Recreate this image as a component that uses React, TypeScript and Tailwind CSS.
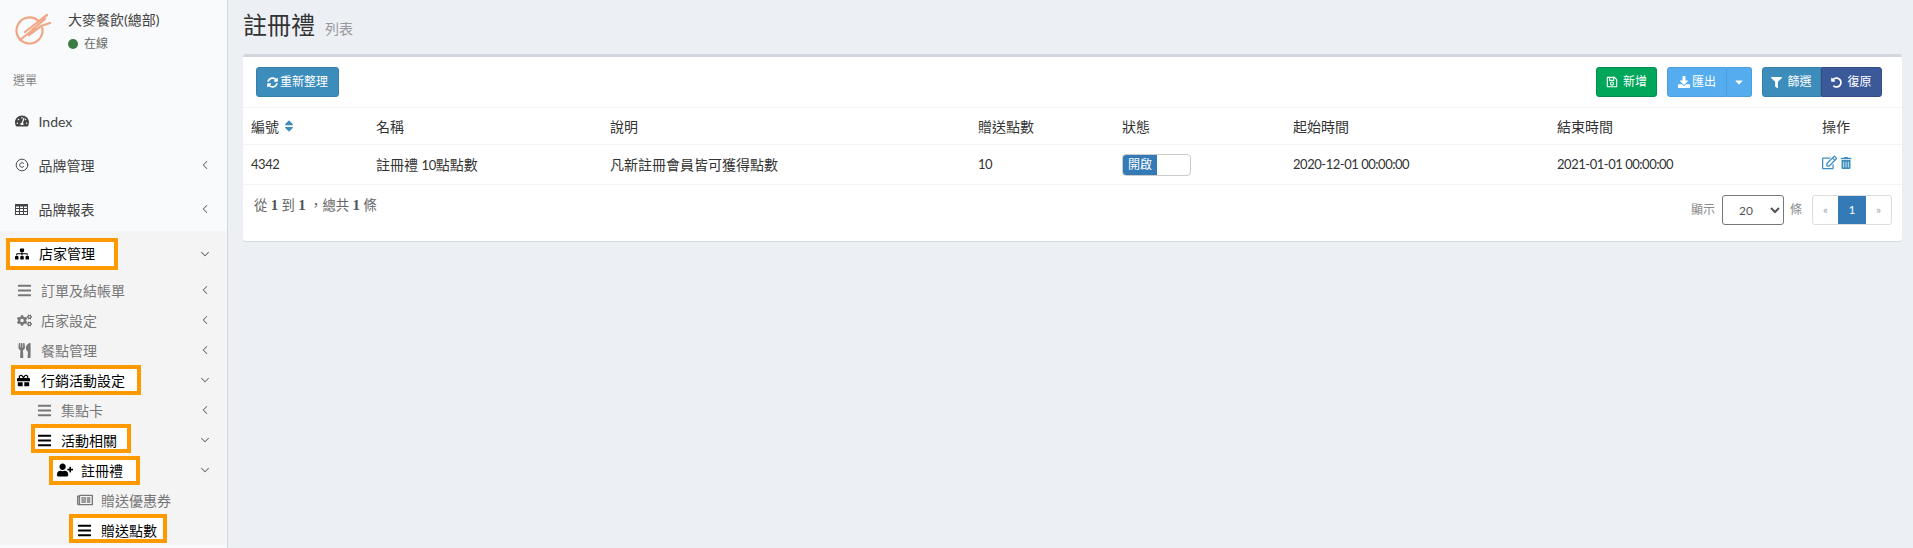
import type { ReactNode } from "react";
import { ChevronDown, ChevronLeft, Copyright } from "lucide-react";
import {
  FaBars,
  FaCaretDown,
  FaCogs,
  FaDownload,
  FaFilter,
  FaGift,
  FaRegEdit,
  FaRegNewspaper,
  FaRegSave,
  FaSitemap,
  FaSort,
  FaSyncAlt,
  FaTachometerAlt,
  FaTrashAlt,
  FaUndoAlt,
  FaUserPlus,
  FaUtensils
} from "react-icons/fa";

const font = "font-['Lato','Noto_Sans_CJK_TC',sans-serif]";

function Logo() {
  return (
    <svg width="36" height="36" viewBox="0 0 36 36" fill="none" stroke="#f0a583" strokeWidth="2.2" strokeLinecap="round">
      <path d="M23.7 10.3 A13 13 0 1 0 27.3 17.2" />
      <path d="M5 29 L20 17" />
      <path d="M10 21 L24 10 L32 4" />
      <path d="M14 24 L26 15 L35 12" />
      <path d="M17 19 L30 8" />
    </svg>
  );
}

function TableIcon() {
  return (
    <svg width="13" height="11" viewBox="0 0 13 11" fill="none" stroke="currentColor" strokeWidth="1">
      <rect x="0.5" y="0.5" width="12" height="10" />
      <path d="M0.5 1.5 H12.5" strokeWidth="2" />
      <path d="M0.5 4.5 H12.5 M0.5 7.5 H12.5 M4.5 1 V10.5 M8.5 1 V10.5" />
    </svg>
  );
}

function Arrow({ open }: { open?: boolean }) {
  return (
    <span className="ml-auto mr-[15px] text-[#666]">
      {open ? <ChevronDown size={14} strokeWidth={1.8} /> : <ChevronLeft size={14} strokeWidth={1.8} />}
    </span>
  );
}

function TopItem({ icon, label, arrow = true }: { icon: ReactNode; label: string; arrow?: boolean }) {
  return (
    <div className="flex h-11 items-center pl-[15px] text-[14px] text-[#444]">
      <span className="flex w-[23.5px] shrink-0">{icon}</span>
      <span>{label}</span>
      {arrow && <Arrow />}
    </div>
  );
}

// the orange marks sit around the icon and label, the row keeps its height
function Mark({ children, className }: { children: ReactNode; className: string }) {
  return (
    <span className={`inline-flex items-center bg-white text-black outline-[4px] outline-[#ff9900] ${className}`}>
      {children}
    </span>
  );
}

function SubItem({ pad, icon, label, arrow = true }: { pad: string; icon: ReactNode; label: string; arrow?: boolean }) {
  return (
    <div className={`flex h-[30px] items-center text-[14px] text-[#777] ${pad}`}>
      <span className="flex w-[24px] shrink-0">{icon}</span>
      <span>{label}</span>
      {arrow && <Arrow />}
    </div>
  );
}

function Sidebar() {
  return (
    <aside className="h-[548px] w-[228px] shrink-0 overflow-hidden border-r border-[#d2d6de] bg-[#f9fafc]">
      <div className="flex h-[64px] pl-[15px] pt-[11px]">
        <Logo />
        <div className="ml-[17px]">
          <div className="text-[14px] leading-[18px] text-[#444]">大麥餐飲(總部)</div>
          <div className="mt-[7px] flex items-center text-[12px] leading-[16px] text-[#666]">
            <span className="mr-[6px] h-[10px] w-[10px] rounded-full bg-[#3a7d44]" />
            在線
          </div>
        </div>
      </div>
      <div className="h-[35px] pl-[13px] pt-[8px] text-[12px] leading-[18px] text-[#848484]">選單</div>
      <TopItem icon={<FaTachometerAlt size={14} />} label="Index" arrow={false} />
      <TopItem icon={<Copyright size={14} strokeWidth={1.6} />} label="品牌管理" />
      <TopItem icon={<TableIcon />} label="品牌報表" />
      <div className="bg-[#f4f4f5]">
        <div className="flex h-[45px] items-center pl-[15px] text-[14px]">
          <Mark className="-ml-[5px] h-[24px] w-[104px] pl-[5px]">
            <span className="flex w-[24px] shrink-0"><FaSitemap size={14} /></span>
            店家管理
          </Mark>
          <Arrow open />
        </div>
        <div className="-mt-[1px]">
          <SubItem pad="pl-[17px]" icon={<FaBars size={15} />} label="訂單及結帳單" />
          <SubItem pad="pl-[17px]" icon={<FaCogs size={15} />} label="店家設定" />
          <SubItem pad="pl-[17px]" icon={<FaUtensils size={15} />} label="餐點管理" />
          <div className="flex h-[30px] items-center pl-[15px] text-[14px]">
            <Mark className="h-[22px] w-[122px] pl-[2px]">
              <span className="flex w-[24px] shrink-0"><FaGift size={13} /></span>
              行銷活動設定
            </Mark>
            <Arrow open />
          </div>
          <SubItem pad="pl-[37px]" icon={<FaBars size={15} />} label="集點卡" />
          <div className="flex h-[30px] items-center pl-[35px] text-[14px]">
            <Mark className="mb-[3px] h-[21px] w-[92px] pl-[2px] pt-[3px]">
              <span className="flex w-[24px] shrink-0"><FaBars size={15} /></span>
              活動相關
            </Mark>
            <Arrow open />
          </div>
          <div className="flex h-[30px] items-center pl-[53px] text-[14px]">
            <Mark className="h-[21px] w-[83px] pl-[4px]">
              <span className="flex w-[24px] shrink-0"><FaUserPlus size={16} /></span>
              註冊禮
            </Mark>
            <Arrow open />
          </div>
          <SubItem pad="pl-[77px]" icon={<FaRegNewspaper size={16} />} label="贈送優惠券" arrow={false} />
          <div className="flex h-[30px] items-center pl-[73px] text-[14px]">
            <Mark className="mb-[3px] h-[21px] w-[90px] pl-[4px] pt-[3px]">
              <span className="flex w-[24px] shrink-0"><FaBars size={15} /></span>
              贈送點數
            </Mark>
          </div>
        </div>
      </div>
    </aside>
  );
}

const columns = [
  "w-[125px]",
  "w-[234px]",
  "w-[368px]",
  "w-[144px]",
  "w-[171px]",
  "w-[264px]",
  "w-[265px]",
  "w-[88px]"
];

const headers = ["編號", "名稱", "說明", "贈送點數", "狀態", "起始時間", "結束時間", "操作"];

function Table() {
  return (
    <table className="w-full table-fixed border-collapse text-left text-[14px] text-[#333]">
      <colgroup>
        {columns.map((width) => (
          <col key={width} className={width} />
        ))}
      </colgroup>
      <thead>
        <tr className="h-[37px] border-y border-[#f4f4f4]">
          {headers.map((header, index) => (
            <th key={header} className="px-2 font-normal">
              <span className="flex items-center gap-[3px]">
                {header}
                {index === 0 && <FaSort size={14} className="text-[#3c8dbc]" />}
              </span>
            </th>
          ))}
        </tr>
      </thead>
      <tbody>
        <tr className="h-[40px] border-b border-[#f4f4f4] text-[13px] tracking-[-0.47px]">
          <td className="px-2">4342</td>
          <td className="px-2 text-[14px] tracking-normal">
            註冊禮 <span className="text-[13px] tracking-[-0.47px]">10</span>點點數
          </td>
          <td className="px-2 text-[14px] tracking-normal">凡新註冊會員皆可獲得點數</td>
          <td className="px-2">10</td>
          <td className="px-2 tracking-normal">
            <div className="flex h-[22px] w-[69px] overflow-hidden rounded-[4px] border border-[#ccc]">
              <span className="flex w-[34px] items-center justify-center bg-[#337ab7] text-[12px] text-white">開啟</span>
            </div>
          </td>
          <td className="px-2">2020-12-01 00:00:00</td>
          <td className="px-2">2021-01-01 00:00:00</td>
          <td className="px-2">
            <span className="-mt-[4px] flex items-center gap-[3px] text-[#3c8dbc]">
              <FaRegEdit size={15} />
              <FaTrashAlt size={12} />
            </span>
          </td>
        </tr>
      </tbody>
    </table>
  );
}

function Toolbar() {
  return (
    <div className="flex h-[50px] items-center justify-between pl-[13px] pr-[20px] text-[12px] text-white">
      <button type="button" className="flex h-[30px] w-[83px] items-center justify-center gap-[2px] rounded-[3px] border border-[#367fa9] bg-[#3c8dbc]">
        <FaSyncAlt size={11} />
        重新整理
      </button>
      <div className="flex items-center gap-[10px]">
        <button type="button" className="flex h-[30px] w-[61px] items-center justify-center gap-[5px] rounded-[3px] border border-[#008d4c] bg-[#00a65a]">
          <FaRegSave size={12} />
          新增
        </button>
        <div className="flex h-[30px] w-[85px]">
          <button type="button" className="flex w-[60px] items-center justify-center gap-[2px] rounded-l-[3px] border border-[#4a9fdc] bg-[#55acee]">
            <FaDownload size={12} />
            匯出
          </button>
          <button type="button" className="flex w-[25px] items-center justify-center rounded-r-[3px] border border-l-0 border-[#4a9fdc] bg-[#55acee]">
            <FaCaretDown size={12} />
          </button>
        </div>
        <div className="flex h-[30px] w-[120px]">
          <button type="button" className="flex w-[59px] items-center justify-center gap-[5px] rounded-l-[3px] border border-[#367fa9] bg-[#3c8dbc]">
            <FaFilter size={11} />
            篩選
          </button>
          <button type="button" className="flex w-[61px] items-center justify-center gap-[5px] rounded-r-[3px] border border-[#344e86] bg-[#3b5998]">
            <FaUndoAlt size={11} />
            復原
          </button>
        </div>
      </div>
    </div>
  );
}

function Footer() {
  const bold = "font-['Liberation_Serif',serif] text-[15px] text-[#555]";
  return (
    <div className="flex h-[56px] justify-between pl-[11px] pr-[10px] text-[#666]">
      <div className="pt-[10px] text-[13.3px] leading-[20px]">
        從 <b className={bold}>1</b> 到 <b className={bold}>1</b> ，總共 <b className={bold}>1</b> 條
      </div>
      <div className="flex items-start pt-[10px] text-[12px] text-[#888]">
        <span className="flex h-[30px] items-center">顯示</span>
        <select
          defaultValue="20"
          className="ml-[7px] mr-[6px] h-[30px] w-[62px] rounded-[3px] border border-[#777] bg-white pl-[12px] text-[12px] text-[#555]"
        >
          <option value="20">20</option>
        </select>
        <span className="flex h-[30px] items-center">條</span>
        <div className="ml-[10px] flex h-[30px] w-[80px] rounded-[3px] border border-[#ddd] text-[12px]">
          <span className="flex w-[25px] items-center justify-center text-[#aaa]">«</span>
          <span className="flex w-[28px] items-center justify-center bg-[#337ab7] text-white">1</span>
          <span className="flex flex-1 items-center justify-center text-[#aaa]">»</span>
        </div>
      </div>
    </div>
  );
}

export default function App() {
  return (
    <div className={`flex h-[548px] w-[1913px] overflow-hidden bg-[#ecf0f5] ${font}`}>
      <Sidebar />
      <main className="min-w-0 flex-1 pl-[15px] pr-[11px]">
        <div className="flex h-[54px] items-start pt-[9px]">
          <h1 className="text-[24px] leading-[32px] text-[#333]">註冊禮</h1>
          <span className="ml-[10px] pt-[10px] text-[14px] leading-[20px] text-[#999]">列表</span>
        </div>
        <section className="rounded-[3px] border-t-[3px] border-[#d2d6de] bg-white shadow-[0_1px_1px_rgba(0,0,0,0.1)]">
          <Toolbar />
          <Table />
          <Footer />
        </section>
      </main>
    </div>
  );
}
